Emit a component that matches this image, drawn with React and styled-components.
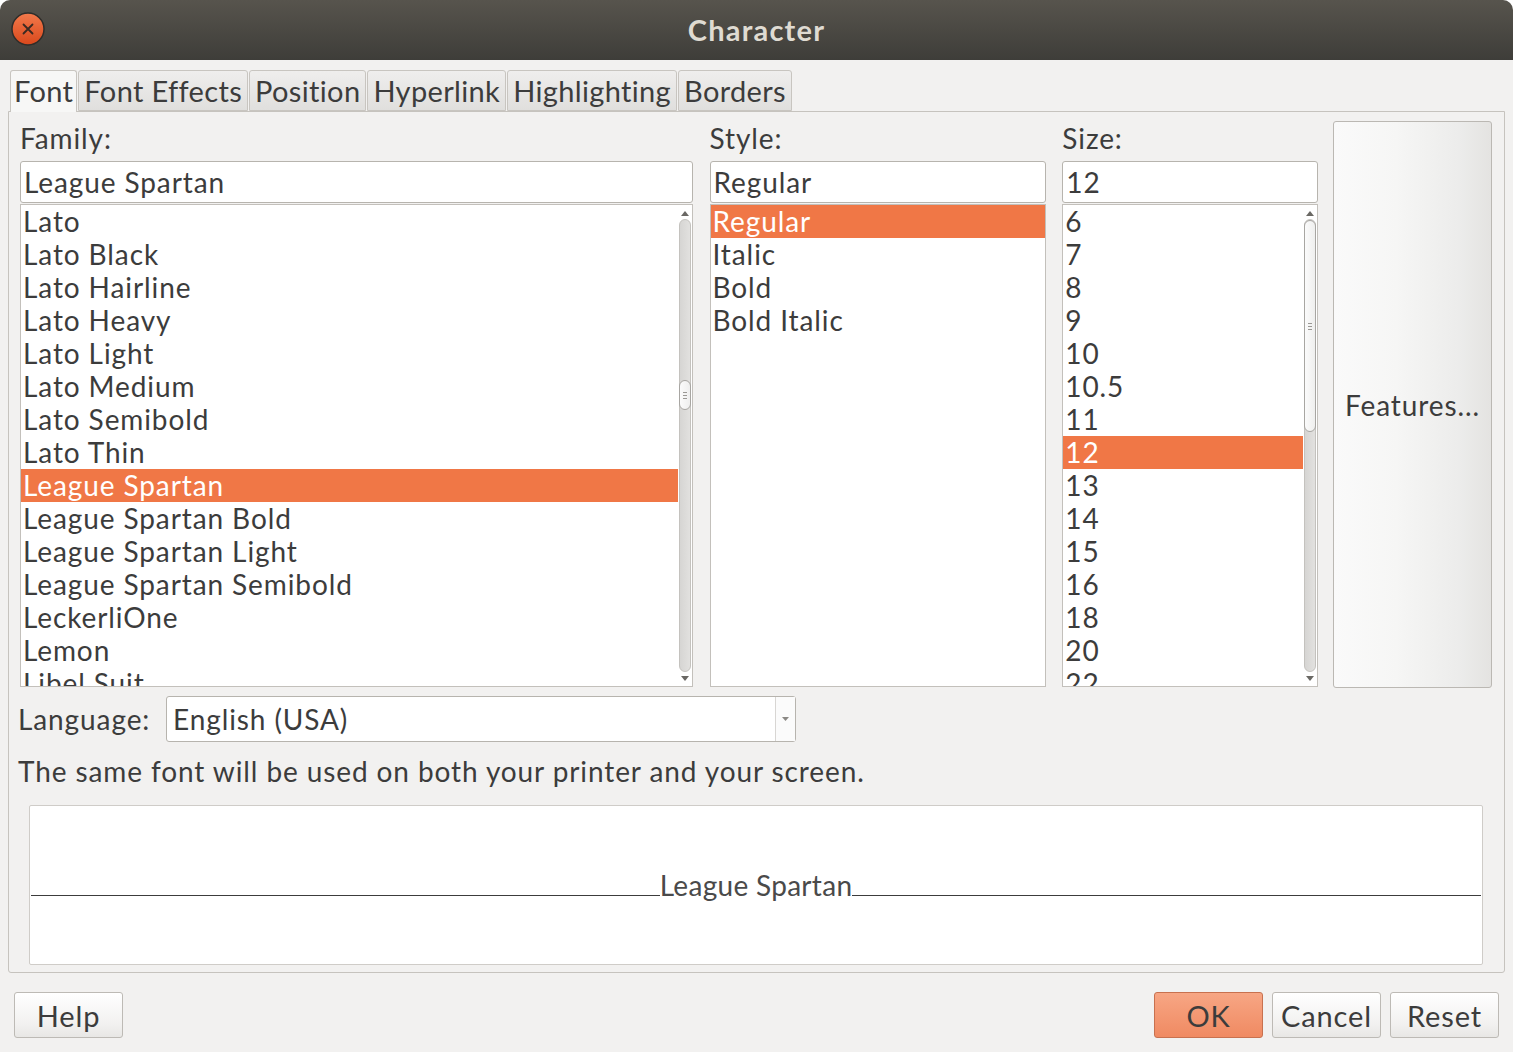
import React from 'react'
import styled, { createGlobalStyle } from 'styled-components'

const Global = createGlobalStyle`
  html, body { margin: 0; padding: 0; background: #ffffff; }
  body { font-family: "Lato", "Noto Sans", sans-serif; color: #3c3c3c; letter-spacing: 0.9px; }
  * { box-sizing: border-box; }
`

const Window = styled.div`
  width: 1513px;
  height: 1052px;
  background: #f2f1f0;
  border-radius: 10px 10px 0 0;
  overflow: hidden;
  display: flex;
  flex-direction: column;
`
const TitleBar = styled.div`
  height: 60px;
  flex: none;
  background: linear-gradient(#57544d, #3e3d39);
  display: flex;
  align-items: center;
  justify-content: center;
  position: relative;
`
const Title = styled.div`
  font-size: 29px;
  font-weight: 700;
  color: #dfdbd2;
  letter-spacing: 1.2px;
  margin-top: -2px;
`
const CloseBtn = styled.div`
  position: absolute;
  left: 11px;
  top: 12px;
  width: 34px;
  height: 34px;
`
const Tabs = styled.div`
  display: flex;
  padding: 10px 0 0 10px;
  flex: none;
`
const Tab = styled.div`
  height: ${p => (p.active ? '42px' : '41px')};
  padding: 0 ${p => p.pad || 5}px;
  border: 1px solid #c8c5c0;
  border-bottom: ${p => (p.active ? 'none' : '1px solid #c8c5c0')};
  border-radius: 3px 3px 0 0;
  background: ${p => (p.active ? '#f7f7f6' : 'linear-gradient(#efeeed, #e0dfdd)')};
  font-size: 29px;
  letter-spacing: 0.35px;
  line-height: 40px;
  margin-right: 1px;
  color: #3c3c3c;
  position: relative;
  z-index: ${p => (p.active ? 2 : 1)};
`
const Panel = styled.div`
  margin: 0 8px;
  height: 862px;
  border: 1px solid #c6c3be;
  border-radius: 0 0 3px 3px;
  background: #f2f1f0;
  display: flex;
  flex-direction: column;
  padding: 9px 12px 0 11px;
  margin-top: -1px;
`
const TopRow = styled.div`
  display: flex;
  height: 566px;
`
const Column = styled.div`
  width: ${p => p.w}px;
  margin-right: ${p => p.mr || 0}px;
  display: flex;
  flex-direction: column;
`
const Label = styled.div`
  height: 40px;
  font-size: 28px;
  line-height: 34px;
`
const Entry = styled.div`
  height: 42px;
  background: #fff;
  border: 1px solid #b7b4ae;
  border-radius: 3px;
  font-size: 28px;
  line-height: 40px;
  padding-left: 3px;
  color: #3c3c3c;
`
const ListBox = styled.div`
  height: 483px;
  margin-top: 1px;
  background: #fff;
  border: 1px solid #c3c0bb;
  display: flex;
  overflow: hidden;
`
const Items = styled.div`
  flex: 1;
  overflow: hidden;
`
const Item = styled.div`
  height: 33px;
  line-height: 33px;
  font-size: 28px;
  padding-left: 2px;
  white-space: nowrap;
  background: ${p => (p.selected ? '#f07746' : 'transparent')};
  color: ${p => (p.selected ? '#ffffff' : '#3c3c3c')};
`
const Scrollbar = styled.div`
  width: 14px;
  flex: none;
  display: flex;
  flex-direction: column;
  align-items: center;
  padding: 2px 0 2px;
`
const Arrow = styled.div`
  height: 12px;
  width: 12px;
  display: flex;
  align-items: center;
  justify-content: center;
  flex: none;
`
const Trough = styled.div`
  flex: 1;
  width: 12px;
  background: linear-gradient(90deg, #d6d5d3, #e2e1df);
  border: 1px solid #c4c2be;
  border-radius: 6px;
  display: flex;
  flex-direction: column;
`
const Thumb = styled.div`
  width: 12px;
  margin-left: -1px;
  height: ${p => p.h}px;
  margin-top: ${p => p.top}px;
  background: linear-gradient(90deg, #fbfbfb, #efefee);
  border: 1px solid #a8a6a2;
  border-radius: 6px;
  display: flex;
  align-items: center;
  justify-content: center;
`
const Grip = styled.div`
  width: 4px;
  height: 7px;
  border-top: 1px solid #9a9894;
  border-bottom: 1px solid #9a9894;
  display: flex;
  align-items: center;
  &::after { content: ''; width: 4px; height: 1px; background: #9a9894; }
`
const FeaturesBtn = styled.div`
  width: 159px;
  height: 567px;
  border: 1px solid #bbb8b3;
  border-radius: 3px;
  background: linear-gradient(90deg, #fafafa 0%, #f6f6f5 40%, #ececeb 80%, #e4e3e1 100%);
  display: flex;
  align-items: center;
  justify-content: center;
  font-size: 28px;
  color: #3c3c3c;
  white-space: nowrap;
`
const LangRow = styled.div`
  display: flex;
  align-items: center;
  margin-top: 9px;
  height: 46px;
`
const LangLabel = styled.div`
  font-size: 28px;
  width: 148px;
  margin-left: -2px;
`
const Combo = styled.div`
  width: 630px;
  height: 46px;
  background: #fff;
  border: 1px solid #b7b4ae;
  border-radius: 3px;
  display: flex;
  align-items: center;
  font-size: 28px;
`
const ComboText = styled.div`
  flex: 1;
  padding-left: 6px;
`
const ComboArrow = styled.div`
  width: 20px;
  height: 44px;
  border-left: 1px solid #d8d6d3;
  display: flex;
  align-items: center;
  justify-content: center;
  background: #fbfbfb;
`
const Info = styled.div`
  font-size: 28px;
  margin: 9px 0 0 -2px;
  height: 40px;
  line-height: 40px;
  white-space: nowrap;
`
const Preview = styled.div`
  margin: 14px 9px 0 9px;
  height: 160px;
  background: #fff;
  border: 1px solid #cfccc8;
  border-radius: 2px;
  display: flex;
  align-items: center;
  padding: 0 1px;
`
const PreviewLine = styled.div`
  flex: 1;
  height: 1px;
  background: #3c3c3c;
  margin-top: 20px;
`
const PreviewText = styled.div`
  font-family: "Lato", sans-serif;
  font-size: 28px;
  letter-spacing: 0.3px;
  color: #4a4a4a;
  line-height: 30px;
`
const ButtonRow = styled.div`
  display: flex;
  align-items: center;
  padding: 19px 14px 0 14px;
  gap: 9px;
`
const Button = styled.div`
  width: 109px;
  height: 46px;
  border: 1px solid ${p => (p.primary ? '#c8714f' : '#bdbab5')};
  border-radius: 3px;
  background: ${p => (p.primary ? 'linear-gradient(#f7a684, #f08a62)' : 'linear-gradient(#ffffff, #f2f1f0 70%, #e8e7e5)')};
  display: flex;
  align-items: center;
  justify-content: center;
  font-size: 29px;
  color: #3c3c3c;
`
const Spacer = styled.div` flex: 1; `

const families = ['Lato', 'Lato Black', 'Lato Hairline', 'Lato Heavy', 'Lato Light', 'Lato Medium', 'Lato Semibold', 'Lato Thin', 'League Spartan', 'League Spartan Bold', 'League Spartan Light', 'League Spartan Semibold', 'LeckerliOne', 'Lemon', 'Libel Suit']
const styles = ['Regular', 'Italic', 'Bold', 'Bold Italic']
const sizes = ['6', '7', '8', '9', '10', '10.5', '11', '12', '13', '14', '15', '16', '18', '20', '22']

const UpArrow = () => (
  <svg width="8" height="5" viewBox="0 0 8 5"><path d="M0 5 L4 0 L8 5 Z" fill="#6a6864" /></svg>
)
const DownArrow = () => (
  <svg width="8" height="5" viewBox="0 0 8 5"><path d="M0 0 L4 5 L8 0 Z" fill="#6a6864" /></svg>
)

const Scroll = ({ top, h }) => (
  <Scrollbar>
    <Arrow><UpArrow /></Arrow>
    <Trough>
      <Thumb top={top} h={h}>
        <Grip />
      </Thumb>
    </Trough>
    <Arrow><DownArrow /></Arrow>
  </Scrollbar>
)

const List = ({ items, selected, scroll }) => (
  <ListBox>
    <Items>
      {items.map(t => (
        <Item key={t} selected={t === selected}>{t}</Item>
      ))}
    </Items>
    {scroll}
  </ListBox>
)

export default function App() {
  return (
    <Window>
      <Global />
      <TitleBar>
        <CloseBtn>
          <svg width="34" height="34" viewBox="0 0 34 34">
            <defs>
              <linearGradient id="cg" x1="0" y1="0" x2="0" y2="1">
                <stop offset="0" stopColor="#f37a4c" />
                <stop offset="1" stopColor="#d9481c" />
              </linearGradient>
            </defs>
            <circle cx="17" cy="17" r="16" fill="url(#cg)" stroke="#2f2d2a" strokeWidth="1.5" />
            <path d="M12.5 12.5 L21.5 21.5 M21.5 12.5 L12.5 21.5" stroke="#3a2a22" strokeWidth="1.8" strokeLinecap="round" />
          </svg>
        </CloseBtn>
        <Title>Character</Title>
      </TitleBar>
      <Tabs>
        <Tab active pad={3}>Font</Tab>
        <Tab>Font Effects</Tab>
        <Tab>Position</Tab>
        <Tab>Hyperlink</Tab>
        <Tab>Highlighting</Tab>
        <Tab>Borders</Tab>
      </Tabs>
      <Panel>
        <TopRow>
          <Column w={673} mr={17}>
            <Label>Family:</Label>
            <Entry>League Spartan</Entry>
            <List items={families} selected="League Spartan" scroll={<Scroll top={160} h={30} />} />
          </Column>
          <Column w={337} mr={16}>
            <Label>Style:</Label>
            <Entry>Regular</Entry>
            <List items={styles} selected="Regular" />
          </Column>
          <Column w={256} mr={15}>
            <Label>Size:</Label>
            <Entry>12</Entry>
            <List items={sizes} selected="12" scroll={<Scroll top={0} h={212} />} />
          </Column>
          <FeaturesBtn>Features...</FeaturesBtn>
        </TopRow>
        <LangRow>
          <LangLabel>Language:</LangLabel>
          <Combo>
            <ComboText>English (USA)</ComboText>
            <ComboArrow>
              <svg width="7" height="4" viewBox="0 0 7 4"><path d="M0 0 L3.5 4 L7 0 Z" fill="#8a8884" /></svg>
            </ComboArrow>
          </Combo>
        </LangRow>
        <Info>The same font will be used on both your printer and your screen.</Info>
        <Preview>
          <PreviewLine />
          <PreviewText>League Spartan</PreviewText>
          <PreviewLine />
        </Preview>
      </Panel>
      <ButtonRow>
        <Button>Help</Button>
        <Spacer />
        <Button primary>OK</Button>
        <Button>Cancel</Button>
        <Button>Reset</Button>
      </ButtonRow>
    </Window>
  )
}
